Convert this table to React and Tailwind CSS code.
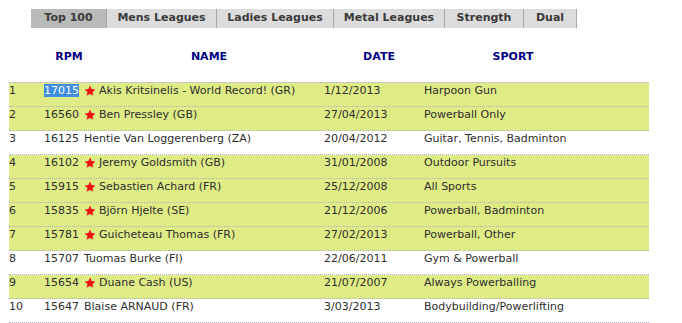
const tabs = [
  { label: "Top 100", w: "w-[76px]", active: true },
  { label: "Mens Leagues", w: "w-[110px]" },
  { label: "Ladies Leagues", w: "w-[117px]" },
  { label: "Metal Leagues", w: "w-[111px]" },
  { label: "Strength", w: "w-[79px]" },
  { label: "Dual", w: "w-[53px]" },
];

const rows = [
  { rank: 1, rpm: "17015", name: "Akis Kritsinelis - World Record! (GR)", date: "1/12/2013", sport: "Harpoon Gun", star: true, hl: true, sel: true },
  { rank: 2, rpm: "16560", name: "Ben Pressley (GB)", date: "27/04/2013", sport: "Powerball Only", star: true, hl: true },
  { rank: 3, rpm: "16125", name: "Hentie Van Loggerenberg (ZA)", date: "20/04/2012", sport: "Guitar, Tennis, Badminton" },
  { rank: 4, rpm: "16102", name: "Jeremy Goldsmith (GB)", date: "31/01/2008", sport: "Outdoor Pursuits", star: true, hl: true },
  { rank: 5, rpm: "15915", name: "Sebastien Achard (FR)", date: "25/12/2008", sport: "All Sports", star: true, hl: true },
  { rank: 6, rpm: "15835", name: "Björn Hjelte (SE)", date: "21/12/2006", sport: "Powerball, Badminton", star: true, hl: true },
  { rank: 7, rpm: "15781", name: "Guicheteau Thomas (FR)", date: "27/02/2013", sport: "Powerball, Other", star: true, hl: true },
  { rank: 8, rpm: "15707", name: "Tuomas Burke (FI)", date: "22/06/2011", sport: "Gym & Powerball" },
  { rank: 9, rpm: "15654", name: "Duane Cash (US)", date: "21/07/2007", sport: "Always Powerballing", star: true, hl: true },
  { rank: 10, rpm: "15647", name: "Blaise ARNAUD (FR)", date: "3/03/2013", sport: "Bodybuilding/Powerlifting" },
];

function Star() {
  return (
    <svg width="12" height="12" viewBox="0 0 24 24" className="mr-[3px] mt-[1px] shrink-0">
      <path d="M12 1l3.2 7 7.6.8-5.7 5.1 1.6 7.6L12 17.6l-6.7 3.9 1.6-7.6-5.7-5.1 7.6-.8z" fill="#f01010" />
    </svg>
  );
}

export default function App() {
  return (
    <div className="h-[323px] w-[682px] overflow-hidden bg-white font-['DejaVu_Sans',sans-serif] text-[11px] text-[#2e2e2e]">
      <div className="ml-[31px] mt-[9px] flex h-[19px]">
        {tabs.map((t) => (
          <div
            key={t.label}
            className={`${t.w} flex items-center justify-center border-r border-[#a8a8a8] text-[11px] font-bold text-[#3a3a3a] ${t.active ? "bg-[#b9bbb8]" : "bg-[#dcdcdc]"}`}
          >
            {t.label}
          </div>
        ))}
      </div>

      <div className="ml-[9px] mt-[22px] flex h-[14px] items-center text-[11px] font-bold text-[#000080]">
        <div className="w-[35px]" />
        <div className="w-[50px] text-center">RPM</div>
        <div className="w-[230px] text-center">NAME</div>
        <div className="w-[110px] text-center">DATE</div>
        <div className="w-[158px] text-center">SPORT</div>
      </div>

      <div className="ml-[9px] mt-[18px] w-[640px] border-t border-[#c8c8c8]">
        {rows.map((r) => (
          <div
            key={r.rank}
            className={`flex h-[24px] border-b border-dotted border-[#b4b0c8] pt-[1px] leading-[14px] ${r.hl ? "bg-[#dfec86]" : "bg-white"}`}
          >
            <div className="w-[35px]">{r.rank}</div>
            <div className="w-[40px]">
              {r.sel ? <span className="bg-[#3d8ee3] text-white">{r.rpm}</span> : r.rpm}
            </div>
            <div className="flex w-[240px] items-start whitespace-nowrap">
              {r.star && <Star />}
              <span>{r.name}</span>
            </div>
            <div className="w-[100px]">{r.date}</div>
            <div className="flex-1 whitespace-nowrap">{r.sport}</div>
          </div>
        ))}
      </div>
    </div>
  );
}
